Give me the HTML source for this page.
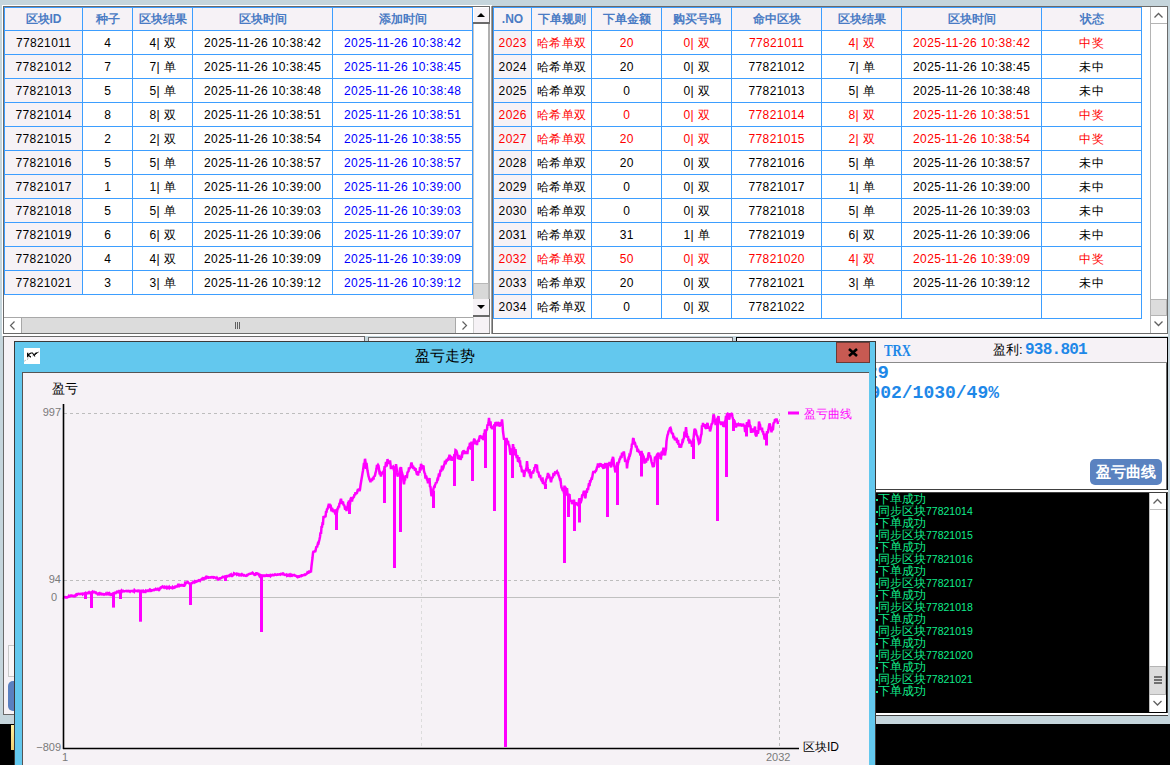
<!DOCTYPE html><html><head><meta charset="utf-8"><style>
html,body{margin:0;padding:0}
body{width:1170px;height:765px;position:relative;overflow:hidden;background:#c5d5dc;font-family:"Liberation Sans",sans-serif;font-size:12px}
div{position:absolute;box-sizing:border-box}
.t{text-align:center;white-space:nowrap;overflow:hidden}
</style></head><body>
<div style="left:2px;top:5px;width:489px;height:330px;background:#fff"></div>
<div style="left:3px;top:6px;width:487px;height:328px;border:1px solid #6a6a6a;border-right:none;border-bottom:none;background:#fff"></div>
<div style="left:3px;top:333px;width:487px;height:1px;background:#6a6a6a"></div>
<div style="left:4px;top:7px;width:469px;height:288px;background:#fff"></div>
<div style="left:4px;top:7px;width:469px;height:23px;background:#f6f2f6"></div>
<div style="left:4px;top:7px;width:78px;height:287px;background:#f6f2f6"></div>
<div style="left:4px;top:7px;width:469px;height:1px;background:#3d9eff"></div>
<div style="left:4px;top:30px;width:469px;height:1px;background:#3d9eff"></div>
<div style="left:4px;top:54px;width:469px;height:1px;background:#3d9eff"></div>
<div style="left:4px;top:78px;width:469px;height:1px;background:#3d9eff"></div>
<div style="left:4px;top:102px;width:469px;height:1px;background:#3d9eff"></div>
<div style="left:4px;top:126px;width:469px;height:1px;background:#3d9eff"></div>
<div style="left:4px;top:150px;width:469px;height:1px;background:#3d9eff"></div>
<div style="left:4px;top:174px;width:469px;height:1px;background:#3d9eff"></div>
<div style="left:4px;top:198px;width:469px;height:1px;background:#3d9eff"></div>
<div style="left:4px;top:222px;width:469px;height:1px;background:#3d9eff"></div>
<div style="left:4px;top:246px;width:469px;height:1px;background:#3d9eff"></div>
<div style="left:4px;top:270px;width:469px;height:1px;background:#3d9eff"></div>
<div style="left:4px;top:294px;width:469px;height:1px;background:#3d9eff"></div>
<div style="left:4px;top:7px;width:1px;height:288px;background:#3d9eff"></div>
<div style="left:82px;top:7px;width:1px;height:288px;background:#3d9eff"></div>
<div style="left:132px;top:7px;width:1px;height:288px;background:#3d9eff"></div>
<div style="left:192px;top:7px;width:1px;height:288px;background:#3d9eff"></div>
<div style="left:332px;top:7px;width:1px;height:288px;background:#3d9eff"></div>
<div style="left:472px;top:7px;width:1px;height:288px;background:#3d9eff"></div>
<div class="t" style="left:5px;top:8px;width:77px;height:22px;line-height:22px;font-weight:bold;color:#4a7bc4">区块ID</div>
<div class="t" style="left:83px;top:8px;width:49px;height:22px;line-height:22px;font-weight:bold;color:#4a7bc4">种子</div>
<div class="t" style="left:133px;top:8px;width:59px;height:22px;line-height:22px;font-weight:bold;color:#4a7bc4">区块结果</div>
<div class="t" style="left:193px;top:8px;width:139px;height:22px;line-height:22px;font-weight:bold;color:#4a7bc4">区块时间</div>
<div class="t" style="left:333px;top:8px;width:139px;height:22px;line-height:22px;font-weight:bold;color:#4a7bc4">添加时间</div>
<div class="t" style="left:5px;top:32px;width:77px;height:23px;line-height:23px;color:#000;letter-spacing:0.35px;text-indent:0.35px">77821011</div>
<div class="t" style="left:83px;top:32px;width:49px;height:23px;line-height:23px;color:#000;letter-spacing:0.35px;text-indent:0.35px">4</div>
<div class="t" style="left:133px;top:32px;width:59px;height:23px;line-height:23px;color:#000;letter-spacing:0.35px;text-indent:0.35px">4| 双</div>
<div class="t" style="left:193px;top:32px;width:139px;height:23px;line-height:23px;color:#000;letter-spacing:0.35px;text-indent:0.35px">2025-11-26 10:38:42</div>
<div class="t" style="left:333px;top:32px;width:139px;height:23px;line-height:23px;color:#0000ff;letter-spacing:0.35px;text-indent:0.35px">2025-11-26 10:38:42</div>
<div class="t" style="left:5px;top:56px;width:77px;height:23px;line-height:23px;color:#000;letter-spacing:0.35px;text-indent:0.35px">77821012</div>
<div class="t" style="left:83px;top:56px;width:49px;height:23px;line-height:23px;color:#000;letter-spacing:0.35px;text-indent:0.35px">7</div>
<div class="t" style="left:133px;top:56px;width:59px;height:23px;line-height:23px;color:#000;letter-spacing:0.35px;text-indent:0.35px">7| 单</div>
<div class="t" style="left:193px;top:56px;width:139px;height:23px;line-height:23px;color:#000;letter-spacing:0.35px;text-indent:0.35px">2025-11-26 10:38:45</div>
<div class="t" style="left:333px;top:56px;width:139px;height:23px;line-height:23px;color:#0000ff;letter-spacing:0.35px;text-indent:0.35px">2025-11-26 10:38:45</div>
<div class="t" style="left:5px;top:80px;width:77px;height:23px;line-height:23px;color:#000;letter-spacing:0.35px;text-indent:0.35px">77821013</div>
<div class="t" style="left:83px;top:80px;width:49px;height:23px;line-height:23px;color:#000;letter-spacing:0.35px;text-indent:0.35px">5</div>
<div class="t" style="left:133px;top:80px;width:59px;height:23px;line-height:23px;color:#000;letter-spacing:0.35px;text-indent:0.35px">5| 单</div>
<div class="t" style="left:193px;top:80px;width:139px;height:23px;line-height:23px;color:#000;letter-spacing:0.35px;text-indent:0.35px">2025-11-26 10:38:48</div>
<div class="t" style="left:333px;top:80px;width:139px;height:23px;line-height:23px;color:#0000ff;letter-spacing:0.35px;text-indent:0.35px">2025-11-26 10:38:48</div>
<div class="t" style="left:5px;top:104px;width:77px;height:23px;line-height:23px;color:#000;letter-spacing:0.35px;text-indent:0.35px">77821014</div>
<div class="t" style="left:83px;top:104px;width:49px;height:23px;line-height:23px;color:#000;letter-spacing:0.35px;text-indent:0.35px">8</div>
<div class="t" style="left:133px;top:104px;width:59px;height:23px;line-height:23px;color:#000;letter-spacing:0.35px;text-indent:0.35px">8| 双</div>
<div class="t" style="left:193px;top:104px;width:139px;height:23px;line-height:23px;color:#000;letter-spacing:0.35px;text-indent:0.35px">2025-11-26 10:38:51</div>
<div class="t" style="left:333px;top:104px;width:139px;height:23px;line-height:23px;color:#0000ff;letter-spacing:0.35px;text-indent:0.35px">2025-11-26 10:38:51</div>
<div class="t" style="left:5px;top:128px;width:77px;height:23px;line-height:23px;color:#000;letter-spacing:0.35px;text-indent:0.35px">77821015</div>
<div class="t" style="left:83px;top:128px;width:49px;height:23px;line-height:23px;color:#000;letter-spacing:0.35px;text-indent:0.35px">2</div>
<div class="t" style="left:133px;top:128px;width:59px;height:23px;line-height:23px;color:#000;letter-spacing:0.35px;text-indent:0.35px">2| 双</div>
<div class="t" style="left:193px;top:128px;width:139px;height:23px;line-height:23px;color:#000;letter-spacing:0.35px;text-indent:0.35px">2025-11-26 10:38:54</div>
<div class="t" style="left:333px;top:128px;width:139px;height:23px;line-height:23px;color:#0000ff;letter-spacing:0.35px;text-indent:0.35px">2025-11-26 10:38:55</div>
<div class="t" style="left:5px;top:152px;width:77px;height:23px;line-height:23px;color:#000;letter-spacing:0.35px;text-indent:0.35px">77821016</div>
<div class="t" style="left:83px;top:152px;width:49px;height:23px;line-height:23px;color:#000;letter-spacing:0.35px;text-indent:0.35px">5</div>
<div class="t" style="left:133px;top:152px;width:59px;height:23px;line-height:23px;color:#000;letter-spacing:0.35px;text-indent:0.35px">5| 单</div>
<div class="t" style="left:193px;top:152px;width:139px;height:23px;line-height:23px;color:#000;letter-spacing:0.35px;text-indent:0.35px">2025-11-26 10:38:57</div>
<div class="t" style="left:333px;top:152px;width:139px;height:23px;line-height:23px;color:#0000ff;letter-spacing:0.35px;text-indent:0.35px">2025-11-26 10:38:57</div>
<div class="t" style="left:5px;top:176px;width:77px;height:23px;line-height:23px;color:#000;letter-spacing:0.35px;text-indent:0.35px">77821017</div>
<div class="t" style="left:83px;top:176px;width:49px;height:23px;line-height:23px;color:#000;letter-spacing:0.35px;text-indent:0.35px">1</div>
<div class="t" style="left:133px;top:176px;width:59px;height:23px;line-height:23px;color:#000;letter-spacing:0.35px;text-indent:0.35px">1| 单</div>
<div class="t" style="left:193px;top:176px;width:139px;height:23px;line-height:23px;color:#000;letter-spacing:0.35px;text-indent:0.35px">2025-11-26 10:39:00</div>
<div class="t" style="left:333px;top:176px;width:139px;height:23px;line-height:23px;color:#0000ff;letter-spacing:0.35px;text-indent:0.35px">2025-11-26 10:39:00</div>
<div class="t" style="left:5px;top:200px;width:77px;height:23px;line-height:23px;color:#000;letter-spacing:0.35px;text-indent:0.35px">77821018</div>
<div class="t" style="left:83px;top:200px;width:49px;height:23px;line-height:23px;color:#000;letter-spacing:0.35px;text-indent:0.35px">5</div>
<div class="t" style="left:133px;top:200px;width:59px;height:23px;line-height:23px;color:#000;letter-spacing:0.35px;text-indent:0.35px">5| 单</div>
<div class="t" style="left:193px;top:200px;width:139px;height:23px;line-height:23px;color:#000;letter-spacing:0.35px;text-indent:0.35px">2025-11-26 10:39:03</div>
<div class="t" style="left:333px;top:200px;width:139px;height:23px;line-height:23px;color:#0000ff;letter-spacing:0.35px;text-indent:0.35px">2025-11-26 10:39:03</div>
<div class="t" style="left:5px;top:224px;width:77px;height:23px;line-height:23px;color:#000;letter-spacing:0.35px;text-indent:0.35px">77821019</div>
<div class="t" style="left:83px;top:224px;width:49px;height:23px;line-height:23px;color:#000;letter-spacing:0.35px;text-indent:0.35px">6</div>
<div class="t" style="left:133px;top:224px;width:59px;height:23px;line-height:23px;color:#000;letter-spacing:0.35px;text-indent:0.35px">6| 双</div>
<div class="t" style="left:193px;top:224px;width:139px;height:23px;line-height:23px;color:#000;letter-spacing:0.35px;text-indent:0.35px">2025-11-26 10:39:06</div>
<div class="t" style="left:333px;top:224px;width:139px;height:23px;line-height:23px;color:#0000ff;letter-spacing:0.35px;text-indent:0.35px">2025-11-26 10:39:07</div>
<div class="t" style="left:5px;top:248px;width:77px;height:23px;line-height:23px;color:#000;letter-spacing:0.35px;text-indent:0.35px">77821020</div>
<div class="t" style="left:83px;top:248px;width:49px;height:23px;line-height:23px;color:#000;letter-spacing:0.35px;text-indent:0.35px">4</div>
<div class="t" style="left:133px;top:248px;width:59px;height:23px;line-height:23px;color:#000;letter-spacing:0.35px;text-indent:0.35px">4| 双</div>
<div class="t" style="left:193px;top:248px;width:139px;height:23px;line-height:23px;color:#000;letter-spacing:0.35px;text-indent:0.35px">2025-11-26 10:39:09</div>
<div class="t" style="left:333px;top:248px;width:139px;height:23px;line-height:23px;color:#0000ff;letter-spacing:0.35px;text-indent:0.35px">2025-11-26 10:39:09</div>
<div class="t" style="left:5px;top:272px;width:77px;height:23px;line-height:23px;color:#000;letter-spacing:0.35px;text-indent:0.35px">77821021</div>
<div class="t" style="left:83px;top:272px;width:49px;height:23px;line-height:23px;color:#000;letter-spacing:0.35px;text-indent:0.35px">3</div>
<div class="t" style="left:133px;top:272px;width:59px;height:23px;line-height:23px;color:#000;letter-spacing:0.35px;text-indent:0.35px">3| 单</div>
<div class="t" style="left:193px;top:272px;width:139px;height:23px;line-height:23px;color:#000;letter-spacing:0.35px;text-indent:0.35px">2025-11-26 10:39:12</div>
<div class="t" style="left:333px;top:272px;width:139px;height:23px;line-height:23px;color:#0000ff;letter-spacing:0.35px;text-indent:0.35px">2025-11-26 10:39:12</div>
<div style="left:473px;top:7px;width:17px;height:310px;background:#fff"></div>
<div style="left:473px;top:7px;width:16px;height:16px;background:#f6f2f6;border-left:1px solid #fff;border-top:1px solid #fff"></div>
<div style="left:489px;top:7px;width:1px;height:17px;background:#6a6a6a"></div>
<div style="left:473px;top:22px;width:17px;height:2px;background:#6a6a6a"></div>
<svg style="position:absolute;left:473px;top:7px" width="16" height="16"><path d="M4 10 L8 6 L12 10 Z" fill="#000"/></svg>
<div style="left:473px;top:24px;width:1px;height:259px;background:#c8c8c8"></div>
<div style="left:488px;top:24px;width:2px;height:276px;background:#b0b0b0"></div>
<div style="left:473px;top:283px;width:16px;height:17px;background:#d8d8d8;border:1px solid #b8b8b8"></div>
<div style="left:473px;top:299px;width:17px;height:18px;background:#f6f2f6"></div>
<div style="left:489px;top:299px;width:1px;height:18px;background:#6a6a6a"></div>
<div style="left:473px;top:315px;width:17px;height:2px;background:#6a6a6a"></div>
<svg style="position:absolute;left:473px;top:299px" width="16" height="16"><path d="M4 6 L8 10 L12 6 Z" fill="#000"/></svg>
<div style="left:4px;top:317px;width:469px;height:16px;background:#fff"></div>
<div style="left:4px;top:317px;width:469px;height:1px;background:#a8a8a8"></div>
<div style="left:21px;top:318px;width:435px;height:15px;background:#dcdcdc;border-left:1px solid #a8a8a8;border-right:1px solid #a8a8a8"></div>
<svg style="position:absolute;left:4px;top:317px" width="17" height="16"><path d="M10.5 4.5 L6.5 8.5 L10.5 12.5" stroke="#606060" stroke-width="1.2" fill="none"/></svg>
<svg style="position:absolute;left:456px;top:317px" width="17" height="16"><path d="M6.5 4.5 L10.5 8.5 L6.5 12.5" stroke="#606060" stroke-width="1.2" fill="none"/></svg>
<div style="left:235px;top:322px;width:1px;height:7px;background:#606060"></div>
<div style="left:237px;top:322px;width:1px;height:7px;background:#606060"></div>
<div style="left:239px;top:322px;width:1px;height:7px;background:#606060"></div>
<div style="left:473px;top:317px;width:17px;height:16px;background:#f6f2f6"></div>
<div style="left:489px;top:317px;width:1px;height:16px;background:#a0a0a0"></div>
<div style="left:473px;top:317px;width:1px;height:16px;background:#d0d0d0"></div>
<div style="left:490px;top:5px;width:2px;height:330px;background:#fff"></div>
<div style="left:491px;top:6px;width:1px;height:328px;background:#a0a0a0"></div>
<div style="left:492px;top:6px;width:676px;height:328px;border:1px solid #6a6a6a;border-bottom:none;background:#fff"></div>
<div style="left:492px;top:333px;width:676px;height:1px;background:#6a6a6a"></div>
<div style="left:493px;top:7px;width:649px;height:312px;background:#fff"></div>
<div style="left:493px;top:7px;width:649px;height:23px;background:#f6f2f6"></div>
<div style="left:493px;top:7px;width:38px;height:311px;background:#f6f2f6"></div>
<div style="left:493px;top:7px;width:649px;height:1px;background:#3d9eff"></div>
<div style="left:493px;top:30px;width:649px;height:1px;background:#3d9eff"></div>
<div style="left:493px;top:54px;width:649px;height:1px;background:#3d9eff"></div>
<div style="left:493px;top:78px;width:649px;height:1px;background:#3d9eff"></div>
<div style="left:493px;top:102px;width:649px;height:1px;background:#3d9eff"></div>
<div style="left:493px;top:126px;width:649px;height:1px;background:#3d9eff"></div>
<div style="left:493px;top:150px;width:649px;height:1px;background:#3d9eff"></div>
<div style="left:493px;top:174px;width:649px;height:1px;background:#3d9eff"></div>
<div style="left:493px;top:198px;width:649px;height:1px;background:#3d9eff"></div>
<div style="left:493px;top:222px;width:649px;height:1px;background:#3d9eff"></div>
<div style="left:493px;top:246px;width:649px;height:1px;background:#3d9eff"></div>
<div style="left:493px;top:270px;width:649px;height:1px;background:#3d9eff"></div>
<div style="left:493px;top:294px;width:649px;height:1px;background:#3d9eff"></div>
<div style="left:493px;top:318px;width:649px;height:1px;background:#3d9eff"></div>
<div style="left:493px;top:7px;width:1px;height:312px;background:#3d9eff"></div>
<div style="left:531px;top:7px;width:1px;height:312px;background:#3d9eff"></div>
<div style="left:591px;top:7px;width:1px;height:312px;background:#3d9eff"></div>
<div style="left:661px;top:7px;width:1px;height:312px;background:#3d9eff"></div>
<div style="left:731px;top:7px;width:1px;height:312px;background:#3d9eff"></div>
<div style="left:821px;top:7px;width:1px;height:312px;background:#3d9eff"></div>
<div style="left:901px;top:7px;width:1px;height:312px;background:#3d9eff"></div>
<div style="left:1041px;top:7px;width:1px;height:312px;background:#3d9eff"></div>
<div style="left:1141px;top:7px;width:1px;height:312px;background:#3d9eff"></div>
<div class="t" style="left:494px;top:8px;width:37px;height:22px;line-height:22px;font-weight:bold;color:#4a7bc4">.NO</div>
<div class="t" style="left:532px;top:8px;width:59px;height:22px;line-height:22px;font-weight:bold;color:#4a7bc4">下单规则</div>
<div class="t" style="left:592px;top:8px;width:69px;height:22px;line-height:22px;font-weight:bold;color:#4a7bc4">下单金额</div>
<div class="t" style="left:662px;top:8px;width:69px;height:22px;line-height:22px;font-weight:bold;color:#4a7bc4">购买号码</div>
<div class="t" style="left:732px;top:8px;width:89px;height:22px;line-height:22px;font-weight:bold;color:#4a7bc4">命中区块</div>
<div class="t" style="left:822px;top:8px;width:79px;height:22px;line-height:22px;font-weight:bold;color:#4a7bc4">区块结果</div>
<div class="t" style="left:902px;top:8px;width:139px;height:22px;line-height:22px;font-weight:bold;color:#4a7bc4">区块时间</div>
<div class="t" style="left:1042px;top:8px;width:99px;height:22px;line-height:22px;font-weight:bold;color:#4a7bc4">状态</div>
<div class="t" style="left:494px;top:32px;width:37px;height:23px;line-height:23px;color:#ff0000;letter-spacing:0.35px;text-indent:0.35px">2023</div>
<div class="t" style="left:532px;top:32px;width:59px;height:23px;line-height:23px;color:#ff0000;letter-spacing:0.35px;text-indent:0.35px">哈希单双</div>
<div class="t" style="left:592px;top:32px;width:69px;height:23px;line-height:23px;color:#ff0000;letter-spacing:0.35px;text-indent:0.35px">20</div>
<div class="t" style="left:662px;top:32px;width:69px;height:23px;line-height:23px;color:#ff0000;letter-spacing:0.35px;text-indent:0.35px">0| 双</div>
<div class="t" style="left:732px;top:32px;width:89px;height:23px;line-height:23px;color:#ff0000;letter-spacing:0.35px;text-indent:0.35px">77821011</div>
<div class="t" style="left:822px;top:32px;width:79px;height:23px;line-height:23px;color:#ff0000;letter-spacing:0.35px;text-indent:0.35px">4| 双</div>
<div class="t" style="left:902px;top:32px;width:139px;height:23px;line-height:23px;color:#ff0000;letter-spacing:0.35px;text-indent:0.35px">2025-11-26 10:38:42</div>
<div class="t" style="left:1042px;top:32px;width:99px;height:23px;line-height:23px;color:#ff0000;letter-spacing:0.35px;text-indent:0.35px">中奖</div>
<div class="t" style="left:494px;top:56px;width:37px;height:23px;line-height:23px;color:#000;letter-spacing:0.35px;text-indent:0.35px">2024</div>
<div class="t" style="left:532px;top:56px;width:59px;height:23px;line-height:23px;color:#000;letter-spacing:0.35px;text-indent:0.35px">哈希单双</div>
<div class="t" style="left:592px;top:56px;width:69px;height:23px;line-height:23px;color:#000;letter-spacing:0.35px;text-indent:0.35px">20</div>
<div class="t" style="left:662px;top:56px;width:69px;height:23px;line-height:23px;color:#000;letter-spacing:0.35px;text-indent:0.35px">0| 双</div>
<div class="t" style="left:732px;top:56px;width:89px;height:23px;line-height:23px;color:#000;letter-spacing:0.35px;text-indent:0.35px">77821012</div>
<div class="t" style="left:822px;top:56px;width:79px;height:23px;line-height:23px;color:#000;letter-spacing:0.35px;text-indent:0.35px">7| 单</div>
<div class="t" style="left:902px;top:56px;width:139px;height:23px;line-height:23px;color:#000;letter-spacing:0.35px;text-indent:0.35px">2025-11-26 10:38:45</div>
<div class="t" style="left:1042px;top:56px;width:99px;height:23px;line-height:23px;color:#000;letter-spacing:0.35px;text-indent:0.35px">未中</div>
<div class="t" style="left:494px;top:80px;width:37px;height:23px;line-height:23px;color:#000;letter-spacing:0.35px;text-indent:0.35px">2025</div>
<div class="t" style="left:532px;top:80px;width:59px;height:23px;line-height:23px;color:#000;letter-spacing:0.35px;text-indent:0.35px">哈希单双</div>
<div class="t" style="left:592px;top:80px;width:69px;height:23px;line-height:23px;color:#000;letter-spacing:0.35px;text-indent:0.35px">0</div>
<div class="t" style="left:662px;top:80px;width:69px;height:23px;line-height:23px;color:#000;letter-spacing:0.35px;text-indent:0.35px">0| 双</div>
<div class="t" style="left:732px;top:80px;width:89px;height:23px;line-height:23px;color:#000;letter-spacing:0.35px;text-indent:0.35px">77821013</div>
<div class="t" style="left:822px;top:80px;width:79px;height:23px;line-height:23px;color:#000;letter-spacing:0.35px;text-indent:0.35px">5| 单</div>
<div class="t" style="left:902px;top:80px;width:139px;height:23px;line-height:23px;color:#000;letter-spacing:0.35px;text-indent:0.35px">2025-11-26 10:38:48</div>
<div class="t" style="left:1042px;top:80px;width:99px;height:23px;line-height:23px;color:#000;letter-spacing:0.35px;text-indent:0.35px">未中</div>
<div class="t" style="left:494px;top:104px;width:37px;height:23px;line-height:23px;color:#ff0000;letter-spacing:0.35px;text-indent:0.35px">2026</div>
<div class="t" style="left:532px;top:104px;width:59px;height:23px;line-height:23px;color:#ff0000;letter-spacing:0.35px;text-indent:0.35px">哈希单双</div>
<div class="t" style="left:592px;top:104px;width:69px;height:23px;line-height:23px;color:#ff0000;letter-spacing:0.35px;text-indent:0.35px">0</div>
<div class="t" style="left:662px;top:104px;width:69px;height:23px;line-height:23px;color:#ff0000;letter-spacing:0.35px;text-indent:0.35px">0| 双</div>
<div class="t" style="left:732px;top:104px;width:89px;height:23px;line-height:23px;color:#ff0000;letter-spacing:0.35px;text-indent:0.35px">77821014</div>
<div class="t" style="left:822px;top:104px;width:79px;height:23px;line-height:23px;color:#ff0000;letter-spacing:0.35px;text-indent:0.35px">8| 双</div>
<div class="t" style="left:902px;top:104px;width:139px;height:23px;line-height:23px;color:#ff0000;letter-spacing:0.35px;text-indent:0.35px">2025-11-26 10:38:51</div>
<div class="t" style="left:1042px;top:104px;width:99px;height:23px;line-height:23px;color:#ff0000;letter-spacing:0.35px;text-indent:0.35px">中奖</div>
<div class="t" style="left:494px;top:128px;width:37px;height:23px;line-height:23px;color:#ff0000;letter-spacing:0.35px;text-indent:0.35px">2027</div>
<div class="t" style="left:532px;top:128px;width:59px;height:23px;line-height:23px;color:#ff0000;letter-spacing:0.35px;text-indent:0.35px">哈希单双</div>
<div class="t" style="left:592px;top:128px;width:69px;height:23px;line-height:23px;color:#ff0000;letter-spacing:0.35px;text-indent:0.35px">20</div>
<div class="t" style="left:662px;top:128px;width:69px;height:23px;line-height:23px;color:#ff0000;letter-spacing:0.35px;text-indent:0.35px">0| 双</div>
<div class="t" style="left:732px;top:128px;width:89px;height:23px;line-height:23px;color:#ff0000;letter-spacing:0.35px;text-indent:0.35px">77821015</div>
<div class="t" style="left:822px;top:128px;width:79px;height:23px;line-height:23px;color:#ff0000;letter-spacing:0.35px;text-indent:0.35px">2| 双</div>
<div class="t" style="left:902px;top:128px;width:139px;height:23px;line-height:23px;color:#ff0000;letter-spacing:0.35px;text-indent:0.35px">2025-11-26 10:38:54</div>
<div class="t" style="left:1042px;top:128px;width:99px;height:23px;line-height:23px;color:#ff0000;letter-spacing:0.35px;text-indent:0.35px">中奖</div>
<div class="t" style="left:494px;top:152px;width:37px;height:23px;line-height:23px;color:#000;letter-spacing:0.35px;text-indent:0.35px">2028</div>
<div class="t" style="left:532px;top:152px;width:59px;height:23px;line-height:23px;color:#000;letter-spacing:0.35px;text-indent:0.35px">哈希单双</div>
<div class="t" style="left:592px;top:152px;width:69px;height:23px;line-height:23px;color:#000;letter-spacing:0.35px;text-indent:0.35px">20</div>
<div class="t" style="left:662px;top:152px;width:69px;height:23px;line-height:23px;color:#000;letter-spacing:0.35px;text-indent:0.35px">0| 双</div>
<div class="t" style="left:732px;top:152px;width:89px;height:23px;line-height:23px;color:#000;letter-spacing:0.35px;text-indent:0.35px">77821016</div>
<div class="t" style="left:822px;top:152px;width:79px;height:23px;line-height:23px;color:#000;letter-spacing:0.35px;text-indent:0.35px">5| 单</div>
<div class="t" style="left:902px;top:152px;width:139px;height:23px;line-height:23px;color:#000;letter-spacing:0.35px;text-indent:0.35px">2025-11-26 10:38:57</div>
<div class="t" style="left:1042px;top:152px;width:99px;height:23px;line-height:23px;color:#000;letter-spacing:0.35px;text-indent:0.35px">未中</div>
<div class="t" style="left:494px;top:176px;width:37px;height:23px;line-height:23px;color:#000;letter-spacing:0.35px;text-indent:0.35px">2029</div>
<div class="t" style="left:532px;top:176px;width:59px;height:23px;line-height:23px;color:#000;letter-spacing:0.35px;text-indent:0.35px">哈希单双</div>
<div class="t" style="left:592px;top:176px;width:69px;height:23px;line-height:23px;color:#000;letter-spacing:0.35px;text-indent:0.35px">0</div>
<div class="t" style="left:662px;top:176px;width:69px;height:23px;line-height:23px;color:#000;letter-spacing:0.35px;text-indent:0.35px">0| 双</div>
<div class="t" style="left:732px;top:176px;width:89px;height:23px;line-height:23px;color:#000;letter-spacing:0.35px;text-indent:0.35px">77821017</div>
<div class="t" style="left:822px;top:176px;width:79px;height:23px;line-height:23px;color:#000;letter-spacing:0.35px;text-indent:0.35px">1| 单</div>
<div class="t" style="left:902px;top:176px;width:139px;height:23px;line-height:23px;color:#000;letter-spacing:0.35px;text-indent:0.35px">2025-11-26 10:39:00</div>
<div class="t" style="left:1042px;top:176px;width:99px;height:23px;line-height:23px;color:#000;letter-spacing:0.35px;text-indent:0.35px">未中</div>
<div class="t" style="left:494px;top:200px;width:37px;height:23px;line-height:23px;color:#000;letter-spacing:0.35px;text-indent:0.35px">2030</div>
<div class="t" style="left:532px;top:200px;width:59px;height:23px;line-height:23px;color:#000;letter-spacing:0.35px;text-indent:0.35px">哈希单双</div>
<div class="t" style="left:592px;top:200px;width:69px;height:23px;line-height:23px;color:#000;letter-spacing:0.35px;text-indent:0.35px">0</div>
<div class="t" style="left:662px;top:200px;width:69px;height:23px;line-height:23px;color:#000;letter-spacing:0.35px;text-indent:0.35px">0| 双</div>
<div class="t" style="left:732px;top:200px;width:89px;height:23px;line-height:23px;color:#000;letter-spacing:0.35px;text-indent:0.35px">77821018</div>
<div class="t" style="left:822px;top:200px;width:79px;height:23px;line-height:23px;color:#000;letter-spacing:0.35px;text-indent:0.35px">5| 单</div>
<div class="t" style="left:902px;top:200px;width:139px;height:23px;line-height:23px;color:#000;letter-spacing:0.35px;text-indent:0.35px">2025-11-26 10:39:03</div>
<div class="t" style="left:1042px;top:200px;width:99px;height:23px;line-height:23px;color:#000;letter-spacing:0.35px;text-indent:0.35px">未中</div>
<div class="t" style="left:494px;top:224px;width:37px;height:23px;line-height:23px;color:#000;letter-spacing:0.35px;text-indent:0.35px">2031</div>
<div class="t" style="left:532px;top:224px;width:59px;height:23px;line-height:23px;color:#000;letter-spacing:0.35px;text-indent:0.35px">哈希单双</div>
<div class="t" style="left:592px;top:224px;width:69px;height:23px;line-height:23px;color:#000;letter-spacing:0.35px;text-indent:0.35px">31</div>
<div class="t" style="left:662px;top:224px;width:69px;height:23px;line-height:23px;color:#000;letter-spacing:0.35px;text-indent:0.35px">1| 单</div>
<div class="t" style="left:732px;top:224px;width:89px;height:23px;line-height:23px;color:#000;letter-spacing:0.35px;text-indent:0.35px">77821019</div>
<div class="t" style="left:822px;top:224px;width:79px;height:23px;line-height:23px;color:#000;letter-spacing:0.35px;text-indent:0.35px">6| 双</div>
<div class="t" style="left:902px;top:224px;width:139px;height:23px;line-height:23px;color:#000;letter-spacing:0.35px;text-indent:0.35px">2025-11-26 10:39:06</div>
<div class="t" style="left:1042px;top:224px;width:99px;height:23px;line-height:23px;color:#000;letter-spacing:0.35px;text-indent:0.35px">未中</div>
<div class="t" style="left:494px;top:248px;width:37px;height:23px;line-height:23px;color:#ff0000;letter-spacing:0.35px;text-indent:0.35px">2032</div>
<div class="t" style="left:532px;top:248px;width:59px;height:23px;line-height:23px;color:#ff0000;letter-spacing:0.35px;text-indent:0.35px">哈希单双</div>
<div class="t" style="left:592px;top:248px;width:69px;height:23px;line-height:23px;color:#ff0000;letter-spacing:0.35px;text-indent:0.35px">50</div>
<div class="t" style="left:662px;top:248px;width:69px;height:23px;line-height:23px;color:#ff0000;letter-spacing:0.35px;text-indent:0.35px">0| 双</div>
<div class="t" style="left:732px;top:248px;width:89px;height:23px;line-height:23px;color:#ff0000;letter-spacing:0.35px;text-indent:0.35px">77821020</div>
<div class="t" style="left:822px;top:248px;width:79px;height:23px;line-height:23px;color:#ff0000;letter-spacing:0.35px;text-indent:0.35px">4| 双</div>
<div class="t" style="left:902px;top:248px;width:139px;height:23px;line-height:23px;color:#ff0000;letter-spacing:0.35px;text-indent:0.35px">2025-11-26 10:39:09</div>
<div class="t" style="left:1042px;top:248px;width:99px;height:23px;line-height:23px;color:#ff0000;letter-spacing:0.35px;text-indent:0.35px">中奖</div>
<div class="t" style="left:494px;top:272px;width:37px;height:23px;line-height:23px;color:#000;letter-spacing:0.35px;text-indent:0.35px">2033</div>
<div class="t" style="left:532px;top:272px;width:59px;height:23px;line-height:23px;color:#000;letter-spacing:0.35px;text-indent:0.35px">哈希单双</div>
<div class="t" style="left:592px;top:272px;width:69px;height:23px;line-height:23px;color:#000;letter-spacing:0.35px;text-indent:0.35px">20</div>
<div class="t" style="left:662px;top:272px;width:69px;height:23px;line-height:23px;color:#000;letter-spacing:0.35px;text-indent:0.35px">0| 双</div>
<div class="t" style="left:732px;top:272px;width:89px;height:23px;line-height:23px;color:#000;letter-spacing:0.35px;text-indent:0.35px">77821021</div>
<div class="t" style="left:822px;top:272px;width:79px;height:23px;line-height:23px;color:#000;letter-spacing:0.35px;text-indent:0.35px">3| 单</div>
<div class="t" style="left:902px;top:272px;width:139px;height:23px;line-height:23px;color:#000;letter-spacing:0.35px;text-indent:0.35px">2025-11-26 10:39:12</div>
<div class="t" style="left:1042px;top:272px;width:99px;height:23px;line-height:23px;color:#000;letter-spacing:0.35px;text-indent:0.35px">未中</div>
<div class="t" style="left:494px;top:296px;width:37px;height:23px;line-height:23px;color:#000;letter-spacing:0.35px;text-indent:0.35px">2034</div>
<div class="t" style="left:532px;top:296px;width:59px;height:23px;line-height:23px;color:#000;letter-spacing:0.35px;text-indent:0.35px">哈希单双</div>
<div class="t" style="left:592px;top:296px;width:69px;height:23px;line-height:23px;color:#000;letter-spacing:0.35px;text-indent:0.35px">0</div>
<div class="t" style="left:662px;top:296px;width:69px;height:23px;line-height:23px;color:#000;letter-spacing:0.35px;text-indent:0.35px">0| 双</div>
<div class="t" style="left:732px;top:296px;width:89px;height:23px;line-height:23px;color:#000;letter-spacing:0.35px;text-indent:0.35px">77821022</div>
<div class="t" style="left:822px;top:296px;width:79px;height:23px;line-height:23px;color:#000;letter-spacing:0.35px;text-indent:0.35px"></div>
<div class="t" style="left:902px;top:296px;width:139px;height:23px;line-height:23px;color:#000;letter-spacing:0.35px;text-indent:0.35px"></div>
<div class="t" style="left:1042px;top:296px;width:99px;height:23px;line-height:23px;color:#000;letter-spacing:0.35px;text-indent:0.35px"></div>
<div style="left:1150px;top:7px;width:17px;height:326px;background:#fff;border-left:1px solid #b4b4b4"></div>
<div style="left:1150px;top:23px;width:17px;height:1px;background:#b4b4b4"></div>
<svg style="position:absolute;left:1150px;top:7px" width="17" height="16"><path d="M4.5 10.5 L8.5 6.5 L12.5 10.5" stroke="#606060" stroke-width="1.3" fill="none"/></svg>
<div style="left:1150px;top:299px;width:17px;height:17px;background:#dcdcdc;border:1px solid #b4b4b4"></div>
<svg style="position:absolute;left:1150px;top:316px" width="17" height="16"><path d="M4.5 5.5 L8.5 9.5 L12.5 5.5" stroke="#606060" stroke-width="1.3" fill="none"/></svg>
<div style="left:2px;top:334px;width:1166px;height:2px;background:#fff"></div>
<div style="left:3px;top:336px;width:362px;height:379px;border:1px solid #6a6a6a;background:#f6f2f6"></div>
<div style="left:8px;top:645px;width:120px;height:32px;border:1px solid #c8c8c8;background:#f8f6f8"></div>
<div style="left:8px;top:681px;width:120px;height:30px;background:#5a80c0;border-radius:5px"></div>
<div style="left:368px;top:337px;width:365px;height:378px;border:1px solid #6a6a6a;background:#f6f2f6"></div>
<div style="left:736px;top:337px;width:432px;height:155px;border:1px solid #000;background:#fff"></div>
<div style="left:737px;top:338px;width:430px;height:24px;background:#f6f2f6"></div>
<div style="left:737px;top:362px;width:430px;height:1px;background:#8a8a8a"></div>
<div style="left:1166px;top:363px;width:1px;height:127px;background:#6a6a6a"></div>
<div style="left:737px;top:489px;width:430px;height:1px;background:#404040"></div>
<div style="left:884px;top:341px;font-family:'Liberation Serif',serif;font-weight:bold;font-size:16px;color:#1e88e8;line-height:20px;transform:scaleX(0.8);transform-origin:0 0">TRX</div>
<div style="left:993px;top:341px;font-size:13px;color:#000;line-height:18px">盈利:</div>
<div style="left:1025px;top:340px;font-family:'Liberation Mono',monospace;font-weight:bold;font-size:16px;letter-spacing:-0.75px;color:#1e88e8;line-height:20px">938.801</div>
<div style="right:281px;top:363px;font-family:'Liberation Mono',monospace;font-weight:bold;font-size:19px;color:#1e88e8;line-height:20px;white-space:pre">1029</div>
<div style="right:171px;top:383px;font-family:'Liberation Mono',monospace;font-weight:bold;font-size:18px;color:#1e88e8;line-height:20px;white-space:pre">902/1030/49%</div>
<div style="left:1090px;top:459px;width:72px;height:26px;background:#5a82c0;border-radius:5px;color:#fff;font-size:15px;font-weight:bold;line-height:26px;text-align:center">盈亏曲线</div>
<div style="left:736px;top:490px;width:432px;height:2px;background:#fff"></div>
<div style="left:736px;top:492px;width:432px;height:224px;border:1px solid #404040;background:#000"></div>
<div style="left:736px;top:713px;width:432px;height:2px;background:#fff"></div>
<div style="left:736px;top:715px;width:432px;height:1px;background:#404040"></div>
<div style="left:876px;top:492px;width:273px;height:220px;overflow:hidden"><div style="left:0px;top:7px;width:2px;height:2px;background:#10ec8c"></div><div style="left:2px;top:0px;font-size:12px;line-height:14px;color:#10ec8c;white-space:nowrap">下单成功</div><div style="left:0px;top:19px;width:2px;height:2px;background:#10ec8c"></div><div style="left:2px;top:12px;font-size:12px;line-height:14px;color:#10ec8c;white-space:nowrap">同步区块<span style="font-size:10.5px">77821014</span></div><div style="left:0px;top:31px;width:2px;height:2px;background:#10ec8c"></div><div style="left:2px;top:24px;font-size:12px;line-height:14px;color:#10ec8c;white-space:nowrap">下单成功</div><div style="left:0px;top:43px;width:2px;height:2px;background:#10ec8c"></div><div style="left:2px;top:36px;font-size:12px;line-height:14px;color:#10ec8c;white-space:nowrap">同步区块<span style="font-size:10.5px">77821015</span></div><div style="left:0px;top:55px;width:2px;height:2px;background:#10ec8c"></div><div style="left:2px;top:48px;font-size:12px;line-height:14px;color:#10ec8c;white-space:nowrap">下单成功</div><div style="left:0px;top:67px;width:2px;height:2px;background:#10ec8c"></div><div style="left:2px;top:60px;font-size:12px;line-height:14px;color:#10ec8c;white-space:nowrap">同步区块<span style="font-size:10.5px">77821016</span></div><div style="left:0px;top:79px;width:2px;height:2px;background:#10ec8c"></div><div style="left:2px;top:72px;font-size:12px;line-height:14px;color:#10ec8c;white-space:nowrap">下单成功</div><div style="left:0px;top:91px;width:2px;height:2px;background:#10ec8c"></div><div style="left:2px;top:84px;font-size:12px;line-height:14px;color:#10ec8c;white-space:nowrap">同步区块<span style="font-size:10.5px">77821017</span></div><div style="left:0px;top:103px;width:2px;height:2px;background:#10ec8c"></div><div style="left:2px;top:96px;font-size:12px;line-height:14px;color:#10ec8c;white-space:nowrap">下单成功</div><div style="left:0px;top:115px;width:2px;height:2px;background:#10ec8c"></div><div style="left:2px;top:108px;font-size:12px;line-height:14px;color:#10ec8c;white-space:nowrap">同步区块<span style="font-size:10.5px">77821018</span></div><div style="left:0px;top:127px;width:2px;height:2px;background:#10ec8c"></div><div style="left:2px;top:120px;font-size:12px;line-height:14px;color:#10ec8c;white-space:nowrap">下单成功</div><div style="left:0px;top:139px;width:2px;height:2px;background:#10ec8c"></div><div style="left:2px;top:132px;font-size:12px;line-height:14px;color:#10ec8c;white-space:nowrap">同步区块<span style="font-size:10.5px">77821019</span></div><div style="left:0px;top:151px;width:2px;height:2px;background:#10ec8c"></div><div style="left:2px;top:144px;font-size:12px;line-height:14px;color:#10ec8c;white-space:nowrap">下单成功</div><div style="left:0px;top:163px;width:2px;height:2px;background:#10ec8c"></div><div style="left:2px;top:156px;font-size:12px;line-height:14px;color:#10ec8c;white-space:nowrap">同步区块<span style="font-size:10.5px">77821020</span></div><div style="left:0px;top:175px;width:2px;height:2px;background:#10ec8c"></div><div style="left:2px;top:168px;font-size:12px;line-height:14px;color:#10ec8c;white-space:nowrap">下单成功</div><div style="left:0px;top:187px;width:2px;height:2px;background:#10ec8c"></div><div style="left:2px;top:180px;font-size:12px;line-height:14px;color:#10ec8c;white-space:nowrap">同步区块<span style="font-size:10.5px">77821021</span></div><div style="left:0px;top:199px;width:2px;height:2px;background:#10ec8c"></div><div style="left:2px;top:192px;font-size:12px;line-height:14px;color:#10ec8c;white-space:nowrap">下单成功</div></div>
<div style="left:1149px;top:493px;width:17px;height:219px;background:#fff;border-left:1px solid #c0c0c0"></div>
<div style="left:1149px;top:509px;width:17px;height:1px;background:#c0c0c0"></div>
<svg style="position:absolute;left:1149px;top:493px" width="17" height="16"><path d="M4.5 10.5 L8.5 6.5 L12.5 10.5" stroke="#606060" stroke-width="1.3" fill="none"/></svg>
<div style="left:1149px;top:666px;width:17px;height:29px;background:#dcdcdc;border:1px solid #b4b4b4"></div>
<div style="left:1154px;top:676px;width:8px;height:2px;background:#707070"></div>
<div style="left:1154px;top:679px;width:8px;height:2px;background:#707070"></div>
<div style="left:1154px;top:682px;width:8px;height:2px;background:#707070"></div>
<svg style="position:absolute;left:1149px;top:695px" width="17" height="16"><path d="M4.5 6 L8.5 10 L12.5 6" stroke="#606060" stroke-width="1.3" fill="none"/></svg>
<div style="left:0px;top:716px;width:1170px;height:8px;background:#c5d5dc"></div>
<div style="left:0px;top:724px;width:1170px;height:41px;background:#000"></div>
<div style="left:11px;top:725px;width:3px;height:25px;background:linear-gradient(#fff0a0,#f0d070)"></div>
<div style="left:14px;top:341px;width:862px;height:440px;border:1px solid #3a3a3a;background:#63c8ee"></div>
<div style="left:24px;top:348px;width:16px;height:16px;background:#fff"><svg width="16" height="16" style="position:absolute;left:0;top:0"><path d="M0.5 13 L15.5 3.5" stroke="#777" stroke-width="0.9" stroke-dasharray="1.2,2" fill="none"/><path d="M3.7 4.8 L3.7 9.2" stroke="#000" stroke-width="1.3"/><path d="M4 7 L6.8 5 M4 7 L6.8 9" stroke="#000" stroke-width="1.1" fill="none"/><path d="M6.8 5 L8.5 5 L11 8.5" stroke="#000" stroke-width="1.1" fill="none"/><path d="M10.3 7.2 L13.6 4.6 L11.2 5.2 Z" fill="#000" stroke="#000" stroke-width="0.8"/></svg></div>
<div style="left:380px;top:347px;width:130px;text-align:center;font-size:15px;line-height:18px;color:#000">盈亏走势</div>
<div style="left:836px;top:342px;width:34px;height:21px;background:#c75a52;border:1px solid #6a3a36"></div>
<svg style="position:absolute;left:836px;top:342px" width="34" height="21"><path d="M13 7 L21 14 M21 7 L13 14" stroke="#000" stroke-width="2.6" fill="none"/></svg>
<div style="left:22px;top:372px;width:847px;height:400px;border-top:1px solid #555;border-left:1px solid #555;background:#f6f2f6"></div>
<div style="left:52px;top:381px;font-size:13px;line-height:16px;color:#000">盈亏</div>
<svg style="position:absolute;left:23px;top:373px" width="845" height="392"><line x1="41" y1="40.5" x2="756" y2="40.5" stroke="#bdbdbd" stroke-width="1" stroke-dasharray="3,3"/><line x1="41" y1="207.5" x2="756" y2="207.5" stroke="#bdbdbd" stroke-width="1" stroke-dasharray="3,3"/><line x1="41" y1="224.5" x2="756" y2="224.5" stroke="#c0c0c0" stroke-width="1"/><line x1="398.5" y1="40" x2="398.5" y2="375" stroke="#dcdcdc" stroke-width="1" stroke-dasharray="3,3"/><line x1="756.5" y1="40" x2="756.5" y2="375" stroke="#bdbdbd" stroke-width="1" stroke-dasharray="3,3"/><polyline points="40.0,224.4 40.5,224.6 41.0,224.3 41.5,224.2 42.0,224.0 42.5,224.2 43.0,224.6 43.5,224.3 44.0,224.5 44.5,224.1 45.0,224.1 45.5,223.8 46.0,222.9 46.5,223.5 47.0,223.2 47.5,223.2 48.0,222.4 48.5,222.4 49.0,222.7 49.5,222.8 50.0,223.1 50.5,223.0 51.0,223.2 51.5,222.8 52.0,223.1 52.5,222.6 53.0,221.8 53.5,222.1 54.0,221.2 54.5,221.4 55.0,220.8 55.5,220.7 56.0,220.9 56.5,221.0 57.0,221.2 57.5,221.1 58.0,220.8 58.5,220.7 59.0,220.8 59.5,221.4 60.0,220.7 60.5,221.1 61.0,221.1 61.5,220.5 62.0,221.0 62.5,221.3 63.0,220.0 63.5,220.4 64.0,220.3 64.5,219.9 65.0,220.2 65.5,219.9 66.0,219.3 66.5,220.0 67.0,219.9 67.5,219.9 68.0,220.0 68.5,219.5 69.0,219.4 69.5,218.8 70.0,219.4 70.5,218.9 71.0,218.8 71.5,218.9 72.0,219.3 72.5,219.8 73.0,220.8 73.5,220.0 74.0,220.5 74.5,221.1 75.0,221.5 75.5,221.2 76.0,220.3 76.5,220.1 77.0,221.1 77.5,220.7 78.0,220.6 78.5,221.3 79.0,221.4 79.5,221.1 80.0,221.1 80.5,221.2 81.0,221.6 81.5,221.2 82.0,221.2 82.5,221.2 83.0,220.5 83.5,221.4 84.0,221.3 84.5,221.2 85.0,220.3 85.5,220.8 86.0,221.3 86.5,220.4 87.0,220.9 87.5,221.4 88.0,220.5 88.5,221.6 89.0,221.2 89.5,220.7 90.0,220.7 90.5,220.6 91.0,220.2 91.5,220.4 92.0,219.6 92.5,219.5 93.0,219.8 93.5,219.2 94.0,218.7 94.5,219.2 95.0,219.3 95.5,218.5 96.0,218.0 96.5,218.3 97.0,218.2 97.5,218.0 98.0,218.5 98.5,217.6 99.0,218.4 99.5,217.6 100.0,217.7 100.5,218.2 101.0,218.4 101.5,218.3 102.0,218.1 102.5,218.0 103.0,218.1 103.5,218.2 104.0,217.9 104.5,218.1 105.0,218.2 105.5,218.0 106.0,218.3 106.5,218.2 107.0,218.7 107.5,218.1 108.0,217.9 108.5,217.9 109.0,218.0 109.5,218.3 110.0,217.9 110.5,218.1 111.0,218.6 111.5,217.1 112.0,217.6 112.5,218.1 113.0,218.1 113.5,218.1 114.0,217.8 114.5,218.2 115.0,218.1 115.5,217.8 116.0,218.9 116.5,218.1 117.0,217.8 117.5,218.0 118.0,217.9 118.5,218.0 119.0,217.0 119.5,217.9 120.0,218.6 120.5,217.9 121.0,218.4 121.5,218.9 122.0,219.0 122.5,219.0 123.0,217.7 123.5,218.0 124.0,217.8 124.5,218.0 125.0,218.0 125.5,216.6 126.0,217.9 126.5,217.0 127.0,217.7 127.5,217.0 128.0,217.5 128.5,217.8 129.0,217.3 129.5,217.3 130.0,217.3 130.5,216.9 131.0,216.7 131.5,217.1 132.0,216.8 132.5,216.2 133.0,217.2 133.5,215.7 134.0,216.3 134.5,215.8 135.0,215.8 135.5,216.6 136.0,217.1 136.5,216.6 137.0,215.3 137.5,214.7 138.0,214.8 138.5,214.1 139.0,213.8 139.5,213.5 140.0,214.2 140.5,214.2 141.0,214.6 141.5,213.9 142.0,214.3 142.5,214.1 143.0,214.9 143.5,215.2 144.0,214.3 144.5,215.1 145.0,214.9 145.5,214.5 146.0,213.9 146.5,215.1 147.0,214.6 147.5,214.4 148.0,214.7 148.5,214.6 149.0,215.0 149.5,214.1 150.0,214.8 150.5,214.9 151.0,214.8 151.5,214.0 152.0,213.6 152.5,214.0 153.0,213.5 153.5,213.3 154.0,213.5 154.5,212.8 155.0,212.1 155.5,212.7 156.0,212.1 156.5,213.0 157.0,212.7 157.5,212.3 158.0,212.5 158.5,212.5 159.0,212.0 159.5,212.2 160.0,211.5 160.5,212.6 161.0,213.5 161.5,212.3 162.0,210.3 162.5,210.7 163.0,209.6 163.5,209.7 164.0,209.3 164.5,210.2 165.0,209.3 165.5,210.0 166.0,210.3 166.5,210.7 167.0,210.8 167.5,210.8 168.0,211.1 168.5,210.2 169.0,210.1 169.5,210.0 170.0,209.3 170.5,208.8 171.0,208.9 171.5,209.3 172.0,208.2 172.5,208.4 173.0,208.8 173.5,208.6 174.0,208.2 174.5,208.3 175.0,208.0 175.5,207.4 176.0,207.2 176.5,207.4 177.0,207.8 177.5,207.0 178.0,206.6 178.5,206.3 179.0,205.8 179.5,206.0 180.0,205.3 180.5,205.7 181.0,204.6 181.5,205.4 182.0,205.0 182.5,204.4 183.0,205.2 183.5,204.7 184.0,203.9 184.5,204.3 185.0,204.7 185.5,204.3 186.0,204.7 186.5,204.6 187.0,204.5 187.5,204.3 188.0,204.6 188.5,204.3 189.0,204.2 189.5,203.4 190.0,204.5 190.5,204.7 191.0,204.2 191.5,204.3 192.0,205.2 192.5,204.0 193.0,204.9 193.5,205.8 194.0,204.9 194.5,205.7 195.0,206.4 195.5,205.9 196.0,206.4 196.5,206.2 197.0,205.3 197.5,205.3 198.0,205.1 198.5,205.0 199.0,204.4 199.5,204.2 200.0,203.8 200.5,204.0 201.0,204.3 201.5,203.9 202.0,203.5 202.5,203.4 203.0,204.5 203.5,203.9 204.0,203.6 204.5,202.2 205.0,203.1 205.5,202.8 206.0,203.0 206.5,202.3 207.0,201.9 207.5,202.3 208.0,201.7 208.5,203.0 209.0,203.0 209.5,202.1 210.0,202.3 210.5,202.0 211.0,200.3 211.5,200.6 212.0,201.0 212.5,201.0 213.0,200.9 213.5,200.7 214.0,201.8 214.5,201.6 215.0,200.9 215.5,200.9 216.0,202.1 216.5,201.9 217.0,202.3 217.5,202.1 218.0,201.6 218.5,202.1 219.0,201.3 219.5,201.9 220.0,202.2 220.5,202.5 221.0,202.1 221.5,202.4 222.0,202.6 222.5,202.7 223.0,202.8 223.5,202.4 224.0,202.0 224.5,202.2 225.0,201.7 225.5,201.2 226.0,201.0 226.5,201.0 227.0,200.8 227.5,200.7 228.0,200.5 228.5,200.5 229.0,200.2 229.5,199.7 230.0,200.1 230.5,201.0 231.0,201.4 231.5,201.7 232.0,202.6 232.5,201.5 233.0,200.5 233.5,200.6 234.0,199.7 234.5,200.9 235.0,200.8 235.5,200.9 236.0,202.0 236.5,203.0 237.0,202.3 237.5,202.0 238.0,202.3 238.5,202.7 239.0,202.8 239.5,202.6 240.0,203.1 240.5,202.8 241.0,202.5 241.5,202.7 242.0,203.1 242.5,202.8 243.0,202.8 243.5,202.1 244.0,202.4 244.5,202.7 245.0,202.3 245.5,202.7 246.0,202.5 246.5,202.6 247.0,202.2 247.5,203.1 248.0,202.6 248.5,202.0 249.0,202.1 249.5,202.9 250.0,201.9 250.5,202.2 251.0,202.2 251.5,201.8 252.0,201.4 252.5,201.8 253.0,201.8 253.5,202.0 254.0,201.8 254.5,201.5 255.0,201.7 255.5,201.6 256.0,201.4 256.5,201.3 257.0,201.2 257.5,201.5 258.0,200.8 258.5,200.9 259.0,201.1 259.5,200.7 260.0,201.1 260.5,200.7 261.0,201.3 261.5,201.8 262.0,201.9 262.5,201.8 263.0,201.8 263.5,201.5 264.0,202.7 264.5,202.3 265.0,202.6 265.5,202.0 266.0,202.4 266.5,201.9 267.0,202.9 267.5,202.9 268.0,201.9 268.5,202.6 269.0,202.8 269.5,202.0 270.0,202.0 270.5,202.2 271.0,202.4 271.5,202.1 272.0,202.6 272.5,202.7 273.0,202.8 273.5,203.2 274.0,203.8 274.5,204.1 275.0,203.5 275.5,203.7 276.0,203.3 276.5,203.1 277.0,203.3 277.5,203.2 278.0,203.2 278.5,202.3 279.0,202.3 279.5,202.6 280.0,202.3 280.5,202.1 281.0,202.0 281.5,201.6 282.0,202.0 282.5,201.7 283.0,201.4 283.5,200.8 284.0,200.6 284.5,199.4 285.0,199.7 285.5,199.7 286.0,198.8 286.5,199.1 287.0,198.9 287.5,198.1 288.0,198.2 288.5,193.0 289.0,188.8 289.5,185.0 290.0,179.9 290.5,178.1 291.0,178.8 291.5,178.4 292.0,179.2 292.5,177.8 293.0,175.3 293.5,173.4 294.0,174.4 294.5,172.2 295.0,170.1 295.5,170.3 296.0,168.2 296.5,166.2 297.0,163.9 297.5,159.3 298.0,161.0 298.5,154.0 299.0,153.9 299.5,150.5 300.0,150.6 300.5,143.0 301.0,144.1 301.5,144.1 302.0,143.0 302.5,144.2 303.0,139.0 303.5,138.9 304.0,136.3 304.5,135.9 305.0,134.4 305.5,132.5 306.0,132.9 306.5,130.7 307.0,135.0 307.5,131.8 308.0,134.4 308.5,138.4 309.0,135.1 309.5,136.3 310.0,139.0 310.5,137.5 311.0,136.6 311.5,138.9 312.0,140.0 312.5,139.5 313.0,136.4 313.5,140.0 314.0,139.2 314.5,135.7 315.0,135.5 315.5,132.9 316.0,134.7 316.5,129.8 317.0,130.8 317.5,127.5 318.0,125.8 318.5,129.0 319.0,130.8 319.5,129.2 320.0,128.8 320.5,132.2 321.0,131.6 321.5,133.0 322.0,135.9 322.5,136.1 323.0,134.1 323.5,138.1 324.0,133.5 324.5,134.1 325.0,130.9 325.5,131.2 326.0,127.5 326.5,132.8 327.0,131.3 327.5,126.3 328.0,125.2 328.5,124.4 329.0,128.5 329.5,125.1 330.0,125.1 330.5,124.1 331.0,123.8 331.5,121.3 332.0,122.4 332.5,119.1 333.0,120.5 333.5,120.4 334.0,119.8 334.5,117.9 335.0,116.1 335.5,117.3 336.0,115.5 336.5,118.3 337.0,116.3 337.5,112.3 338.0,109.2 338.5,106.3 339.0,103.4 339.5,100.4 340.0,97.5 340.5,93.9 341.0,90.0 341.5,91.6 342.0,85.8 342.5,89.0 343.0,95.8 343.5,89.8 344.0,94.1 344.5,97.8 345.0,100.3 345.5,103.2 346.0,104.6 346.5,106.6 347.0,107.1 347.5,109.3 348.0,105.8 348.5,107.0 349.0,108.0 349.5,105.7 350.0,105.2 350.5,106.6 351.0,102.9 351.5,103.6 352.0,102.3 352.5,99.9 353.0,98.5 353.5,95.8 354.0,91.9 354.5,92.6 355.0,91.8 355.5,92.6 356.0,95.8 356.5,99.8 357.0,99.5 357.5,101.8 358.0,103.5 358.5,99.1 359.0,99.9 359.5,99.1 360.0,101.6 360.5,98.4 361.0,98.2 361.5,94.3 362.0,94.3 362.5,93.1 363.0,89.0 363.5,93.4 364.0,91.5 364.5,86.0 365.0,89.3 365.5,88.3 366.0,89.8 366.5,90.1 367.0,87.5 367.5,91.4 368.0,96.0 368.5,94.3 369.0,95.3 369.5,94.1 370.0,93.7 370.5,95.7 371.0,97.4 371.5,94.6 372.0,93.7 372.5,96.4 373.0,91.1 373.5,94.1 374.0,99.4 374.5,102.7 375.0,103.3 375.5,101.3 376.0,102.2 376.5,100.4 377.0,96.1 377.5,96.3 378.0,94.1 378.5,98.1 379.0,99.5 379.5,101.9 380.0,103.7 380.5,108.5 381.0,111.4 381.5,106.9 382.0,107.4 382.5,103.2 383.0,103.1 383.5,103.3 384.0,103.6 384.5,99.3 385.0,98.9 385.5,98.3 386.0,94.5 386.5,96.2 387.0,94.2 387.5,95.1 388.0,91.7 388.5,89.5 389.0,92.1 389.5,93.3 390.0,92.7 390.5,96.0 391.0,94.9 391.5,95.1 392.0,97.8 392.5,95.2 393.0,97.5 393.5,99.5 394.0,101.8 394.5,100.9 395.0,102.5 395.5,99.2 396.0,99.2 396.5,99.8 397.0,94.2 397.5,97.7 398.0,90.9 398.5,92.9 399.0,94.0 399.5,96.2 400.0,93.2 400.5,92.6 401.0,98.0 401.5,99.7 402.0,100.7 402.5,105.5 403.0,102.7 403.5,104.1 404.0,106.6 404.5,106.8 405.0,110.2 405.5,106.4 406.0,109.0 406.5,105.0 407.0,113.4 407.5,113.9 408.0,118.6 408.5,123.2 409.0,122.0 409.5,119.9 410.0,117.8 410.5,115.6 411.0,114.3 411.5,114.8 412.0,112.1 412.5,110.9 413.0,109.4 413.5,110.1 414.0,108.2 414.5,105.9 415.0,106.1 415.5,103.4 416.0,100.4 416.5,103.5 417.0,100.5 417.5,96.7 418.0,98.8 418.5,96.8 419.0,92.7 419.5,97.2 420.0,94.2 420.5,94.3 421.0,92.3 421.5,90.9 422.0,87.7 422.5,91.2 423.0,88.7 423.5,87.3 424.0,87.6 424.5,86.8 425.0,87.5 425.5,85.4 426.0,85.6 426.5,81.7 427.0,84.3 427.5,86.1 428.0,87.3 428.5,84.4 429.0,84.8 429.5,87.7 430.0,84.4 430.5,84.9 431.0,85.2 431.5,81.1 432.0,81.8 432.5,77.1 433.0,77.4 433.5,78.1 434.0,79.7 434.5,82.7 435.0,86.1 435.5,82.1 436.0,83.5 436.5,86.6 437.0,85.2 437.5,86.7 438.0,85.6 438.5,83.0 439.0,83.2 439.5,78.5 440.0,81.3 440.5,77.2 441.0,78.6 441.5,78.7 442.0,78.8 442.5,80.8 443.0,79.4 443.5,78.4 444.0,79.9 444.5,79.9 445.0,75.5 445.5,74.4 446.0,74.1 446.5,72.5 447.0,69.8 447.5,76.2 448.0,75.8 448.5,68.6 449.0,71.9 449.5,71.5 450.0,71.1 450.5,69.4 451.0,66.5 451.5,66.0 452.0,68.8 452.5,71.3 453.0,68.5 453.5,69.4 454.0,72.0 454.5,67.4 455.0,68.9 455.5,67.3 456.0,67.4 456.5,64.1 457.0,62.5 457.5,63.3 458.0,63.9 458.5,62.9 459.0,64.0 459.5,65.3 460.0,66.0 460.5,66.1 461.0,61.0 461.5,60.8 462.0,56.4 462.5,63.1 463.0,57.8 463.5,57.2 464.0,56.4 464.5,51.4 465.0,52.8 465.5,50.0 466.0,44.9 466.5,49.7 467.0,52.4 467.5,48.3 468.0,54.0 468.5,54.2 469.0,55.8 469.5,55.1 470.0,56.0 470.5,52.7 471.0,54.0 471.5,51.2 472.0,52.5 472.5,49.2 473.0,49.8 473.5,53.2 474.0,51.3 474.5,50.5 475.0,49.1 475.5,49.9 476.0,51.8 476.5,53.3 477.0,52.7 477.5,51.6 478.0,49.4 478.5,50.5 479.0,46.3 479.5,51.1 480.0,58.5 480.5,62.1 481.0,66.5 481.5,66.0 482.0,66.6 482.5,68.1 483.0,67.6 483.5,64.9 484.0,67.7 484.5,68.6 485.0,67.8 485.5,72.1 486.0,71.5 486.5,73.9 487.0,78.4 487.5,81.7 488.0,80.8 488.5,80.2 489.0,75.5 489.5,78.4 490.0,71.2 490.5,75.7 491.0,74.2 491.5,78.4 492.0,82.4 492.5,76.0 493.0,81.3 493.5,83.7 494.0,83.5 494.5,83.4 495.0,89.0 495.5,86.3 496.0,84.2 496.5,90.1 497.0,87.4 497.5,94.0 498.0,92.7 498.5,95.6 499.0,99.1 499.5,98.5 500.0,97.1 500.5,97.9 501.0,104.0 501.5,101.6 502.0,97.3 502.5,98.5 503.0,96.2 503.5,94.8 504.0,88.2 504.5,93.2 505.0,96.9 505.5,98.2 506.0,100.2 506.5,96.2 507.0,102.3 507.5,102.3 508.0,105.3 508.5,98.9 509.0,99.4 509.5,99.6 510.0,100.5 510.5,97.1 511.0,98.6 511.5,94.2 512.0,94.8 512.5,92.3 513.0,92.3 513.5,92.5 514.0,92.6 514.5,98.9 515.0,99.2 515.5,99.4 516.0,102.3 516.5,104.5 517.0,102.0 517.5,104.3 518.0,106.2 518.5,107.1 519.0,106.4 519.5,104.3 520.0,110.8 520.5,110.1 521.0,110.4 521.5,110.7 522.0,112.4 522.5,109.6 523.0,106.9 523.5,105.7 524.0,104.3 524.5,102.6 525.0,100.0 525.5,103.9 526.0,101.4 526.5,105.6 527.0,103.6 527.5,106.8 528.0,109.3 528.5,106.5 529.0,104.1 529.5,104.6 530.0,103.9 530.5,99.9 531.0,101.0 531.5,101.4 532.0,99.5 532.5,99.6 533.0,99.9 533.5,99.1 534.0,98.5 534.5,99.7 535.0,99.8 535.5,102.0 536.0,103.2 536.5,104.8 537.0,106.7 537.5,106.6 538.0,111.4 538.5,114.5 539.0,115.3 539.5,117.0 540.0,117.9 540.5,116.7 541.0,120.5 541.5,112.6 542.0,116.6 542.5,113.9 543.0,118.7 543.5,122.7 544.0,115.1 544.5,120.7 545.0,122.5 545.5,122.3 546.0,124.9 546.5,121.2 547.0,127.4 547.5,127.6 548.0,128.0 548.5,128.0 549.0,131.1 549.5,129.3 550.0,130.6 550.5,129.4 551.0,126.6 551.5,130.4 552.0,130.9 552.5,132.0 553.0,129.3 553.5,130.8 554.0,132.0 554.5,130.7 555.0,132.1 555.5,132.9 556.0,127.5 556.5,125.2 557.0,129.5 557.5,130.1 558.0,128.6 558.5,126.9 559.0,122.9 559.5,121.3 560.0,122.5 560.5,119.5 561.0,117.9 561.5,119.3 562.0,125.2 562.5,124.3 563.0,119.8 563.5,118.3 564.0,118.4 564.5,115.2 565.0,117.2 565.5,113.4 566.0,110.2 566.5,113.0 567.0,108.5 567.5,108.6 568.0,107.0 568.5,105.5 569.0,105.6 569.5,102.8 570.0,99.9 570.5,98.2 571.0,98.8 571.5,98.7 572.0,99.0 572.5,98.1 573.0,97.9 573.5,96.5 574.0,94.2 574.5,93.5 575.0,90.4 575.5,93.0 576.0,93.5 576.5,92.9 577.0,91.1 577.5,90.4 578.0,91.6 578.5,91.0 579.0,93.3 579.5,94.0 580.0,94.4 580.5,95.8 581.0,92.2 581.5,92.2 582.0,91.0 582.5,90.6 583.0,94.2 583.5,94.2 584.0,90.8 584.5,91.4 585.0,92.0 585.5,91.7 586.0,92.7 586.5,88.9 587.0,90.2 587.5,92.4 588.0,94.4 588.5,90.4 589.0,87.0 589.5,86.1 590.0,83.9 590.5,86.5 591.0,93.6 591.5,92.9 592.0,97.0 592.5,99.4 593.0,96.5 593.5,93.8 594.0,91.0 594.5,91.4 595.0,92.3 595.5,89.3 596.0,89.1 596.5,86.3 597.0,86.2 597.5,84.2 598.0,84.4 598.5,85.0 599.0,79.6 599.5,81.4 600.0,81.4 600.5,79.5 601.0,79.5 601.5,83.3 602.0,87.4 602.5,87.1 603.0,88.6 603.5,87.4 604.0,95.3 604.5,90.5 605.0,88.6 605.5,85.1 606.0,85.2 606.5,81.8 607.0,82.1 607.5,80.3 608.0,77.1 608.5,75.0 609.0,70.6 609.5,71.9 610.0,65.9 610.5,65.1 611.0,69.0 611.5,69.2 612.0,70.0 612.5,72.2 613.0,74.5 613.5,72.7 614.0,75.3 614.5,78.7 615.0,78.2 615.5,77.6 616.0,78.9 616.5,79.3 617.0,80.3 617.5,82.4 618.0,81.8 618.5,77.9 619.0,82.0 619.5,80.5 620.0,83.1 620.5,82.6 621.0,85.6 621.5,90.7 622.0,86.9 622.5,88.4 623.0,89.6 623.5,86.3 624.0,85.5 624.5,87.6 625.0,84.2 625.5,80.5 626.0,79.5 626.5,83.9 627.0,82.3 627.5,83.9 628.0,85.9 628.5,88.5 629.0,90.3 629.5,92.3 630.0,94.2 630.5,91.8 631.0,92.1 631.5,88.9 632.0,83.5 632.5,84.5 633.0,84.0 633.5,83.3 634.0,82.1 634.5,80.5 635.0,81.6 635.5,79.6 636.0,84.1 636.5,83.4 637.0,80.9 637.5,85.9 638.0,85.5 638.5,78.5 639.0,82.6 639.5,78.6 640.0,78.5 640.5,74.7 641.0,79.4 641.5,81.0 642.0,82.3 642.5,78.5 643.0,76.3 643.5,68.2 644.0,64.9 644.5,62.1 645.0,61.1 645.5,58.5 646.0,57.6 646.5,56.5 647.0,55.1 647.5,54.8 648.0,56.2 648.5,59.6 649.0,60.3 649.5,60.4 650.0,61.0 650.5,65.4 651.0,63.0 651.5,65.6 652.0,67.0 652.5,65.0 653.0,67.4 653.5,64.6 654.0,68.7 654.5,68.6 655.0,66.8 655.5,71.9 656.0,70.5 656.5,74.7 657.0,71.8 657.5,73.2 658.0,74.5 658.5,71.7 659.0,70.9 659.5,67.8 660.0,68.1 660.5,65.8 661.0,64.9 661.5,58.6 662.0,64.0 662.5,59.6 663.0,54.0 663.5,59.2 664.0,61.8 664.5,64.8 665.0,63.2 665.5,68.1 666.0,65.7 666.5,70.6 667.0,66.8 667.5,69.4 668.0,68.9 668.5,68.9 669.0,73.9 669.5,71.0 670.0,69.6 670.5,66.0 671.0,61.0 671.5,56.7 672.0,55.9 672.5,57.1 673.0,58.1 673.5,61.7 674.0,62.6 674.5,63.5 675.0,66.3 675.5,67.8 676.0,70.4 676.5,70.0 677.0,69.1 677.5,65.1 678.0,62.4 678.5,60.9 679.0,52.2 679.5,54.2 680.0,49.9 680.5,52.4 681.0,53.4 681.5,51.2 682.0,53.1 682.5,54.9 683.0,55.2 683.5,55.7 684.0,51.2 684.5,50.0 685.0,52.9 685.5,54.8 686.0,54.8 686.5,53.5 687.0,58.3 687.5,56.7 688.0,54.6 688.5,51.2 689.0,50.9 689.5,50.0 690.0,46.1 690.5,41.4 691.0,42.6 691.5,45.3 692.0,47.0 692.5,51.0 693.0,51.0 693.5,49.4 694.0,46.5 694.5,45.5 695.0,44.7 695.5,43.1 696.0,48.5 696.5,49.1 697.0,49.3 697.5,49.5 698.0,52.0 698.5,49.2 699.0,49.8 699.5,48.7 700.0,51.8 700.5,53.8 701.0,52.9 701.5,51.1 702.0,48.3 702.5,47.3 703.0,42.9 703.5,45.4 704.0,41.3 704.5,40.9 705.0,42.2 705.5,42.8 706.0,46.5 706.5,45.5 707.0,40.2 707.5,42.8 708.0,41.5 708.5,40.8 709.0,41.0 709.5,44.0 710.0,45.9 710.5,48.8 711.0,48.9 711.5,47.3 712.0,52.4 712.5,49.9 713.0,54.5 713.5,51.4 714.0,52.8 714.5,51.5 715.0,51.1 715.5,53.2 716.0,51.4 716.5,52.0 717.0,52.5 717.5,50.4 718.0,53.1 718.5,52.6 719.0,51.3 719.5,53.4 720.0,50.7 720.5,52.0 721.0,52.7 721.5,52.3 722.0,58.0 722.5,58.4 723.0,55.6 723.5,52.8 724.0,49.1 724.5,53.1 725.0,54.1 725.5,49.0 726.0,46.6 726.5,50.5 727.0,52.9 727.5,53.2 728.0,58.8 728.5,58.8 729.0,55.4 729.5,57.8 730.0,56.6 730.5,58.3 731.0,59.0 731.5,55.7 732.0,53.5 732.5,61.7 733.0,62.6 733.5,63.3 734.0,57.2 734.5,60.1 735.0,60.5 735.5,56.4 736.0,48.6 736.5,51.0 737.0,51.7 737.5,55.2 738.0,56.8 738.5,56.1 739.0,54.7 739.5,59.3 740.0,58.2 740.5,61.3 741.0,61.9 741.5,65.5 742.0,65.9 742.5,62.1 743.0,62.3 743.5,63.5 744.0,58.4 744.5,58.9 745.0,59.0 745.5,56.6 746.0,52.9 746.5,50.5 747.0,51.4 747.5,54.7 748.0,55.7 748.5,59.3 749.0,53.5 749.5,56.9 750.0,56.3 750.5,50.2 751.0,49.6 751.5,49.3 752.0,46.2 752.5,46.7 753.0,47.8 753.5,45.6 754.0,47.8 754.5,48.4 755.0,51.1" fill="none" stroke="#ff00ff" stroke-width="2.5" stroke-linejoin="miter" stroke-miterlimit="2"/><rect x="61" y="220.0" width="3" height="6.0" fill="#ff00ff"/><rect x="67" y="218.5" width="3" height="16.5" fill="#ff00ff"/><rect x="89" y="219.60000000000002" width="3" height="15.0" fill="#ff00ff"/><rect x="96" y="217.25" width="3" height="8.75" fill="#ff00ff"/><rect x="116" y="217.0" width="3" height="31.700000000000045" fill="#ff00ff"/><rect x="166" y="210.0" width="3" height="22.0" fill="#ff00ff"/><rect x="201" y="202.79999999999995" width="3" height="5.2000000000000455" fill="#ff00ff"/><rect x="237" y="201.5333333333333" width="3" height="57.4666666666667" fill="#ff00ff"/><rect x="274" y="203.0" width="3" height="2.0" fill="#ff00ff"/><rect x="312" y="136.66666666666669" width="3" height="20.333333333333314" fill="#ff00ff"/><rect x="325" y="129.5" width="3" height="11.5" fill="#ff00ff"/><rect x="360" y="95.66666666666669" width="3" height="34.333333333333314" fill="#ff00ff"/><rect x="370" y="93.5" width="3" height="101.5" fill="#ff00ff"/><rect x="376" y="97.33333333333331" width="3" height="61.666666666666686" fill="#ff00ff"/><rect x="409" y="117.66666666666669" width="3" height="17.333333333333314" fill="#ff00ff"/><rect x="430" y="81.33333333333331" width="3" height="31.666666666666686" fill="#ff00ff"/><rect x="448" y="71.0" width="3" height="37.0" fill="#ff00ff"/><rect x="461" y="59.666666666666686" width="3" height="35.333333333333314" fill="#ff00ff"/><rect x="470" y="51.5" width="3" height="86.5" fill="#ff00ff"/><rect x="481" y="66.0" width="3" height="308.0" fill="#ff00ff"/><rect x="488" y="76.0" width="3" height="29.0" fill="#ff00ff"/><rect x="521" y="111.0" width="3" height="5.0" fill="#ff00ff"/><rect x="540" y="116.0" width="3" height="74.0" fill="#ff00ff"/><rect x="544" y="120.66666666666669" width="3" height="23.333333333333314" fill="#ff00ff"/><rect x="550" y="129.39999999999998" width="3" height="28.600000000000023" fill="#ff00ff"/><rect x="555" y="128.0" width="3" height="21.5" fill="#ff00ff"/><rect x="583" y="89.80000000000001" width="3" height="54.19999999999999" fill="#ff00ff"/><rect x="593" y="91.0" width="3" height="41.0" fill="#ff00ff"/><rect x="617" y="81.0" width="3" height="22.5" fill="#ff00ff"/><rect x="633" y="82.0" width="3" height="50.0" fill="#ff00ff"/><rect x="669" y="66.0" width="3" height="20.0" fill="#ff00ff"/><rect x="693" y="46.0" width="3" height="102.0" fill="#ff00ff"/><rect x="702" y="44.333333333333314" width="3" height="59.666666666666686" fill="#ff00ff"/><rect x="709" y="46.0" width="3" height="12.0" fill="#ff00ff"/><rect x="722" y="54.333333333333314" width="3" height="9.166666666666686" fill="#ff00ff"/><rect x="742" y="60.666666666666686" width="3" height="11.833333333333314" fill="#ff00ff"/><line x1="40.5" y1="31" x2="40.5" y2="376" stroke="#000" stroke-width="1.6"/><line x1="40" y1="375.5" x2="776" y2="375.5" stroke="#000" stroke-width="1.6"/><line x1="765" y1="40" x2="776" y2="40" stroke="#ff00ff" stroke-width="3"/></svg>
<div style="left:21px;top:406px;font-size:11px;line-height:12px;color:#7a7a7a;text-align:right;width:40px">997</div>
<div style="left:21px;top:573px;font-size:11px;line-height:12px;color:#7a7a7a;text-align:right;width:40px">94</div>
<div style="left:17px;top:591px;font-size:11px;line-height:12px;color:#7a7a7a;text-align:right;width:40px">0</div>
<div style="left:21px;top:741px;font-size:11px;line-height:12px;color:#7a7a7a;text-align:right;width:40px">−809</div>
<div style="left:62px;top:751px;font-size:11px;line-height:12px;color:#7a7a7a">1</div>
<div style="left:766px;top:751px;font-size:11px;line-height:12px;color:#7a7a7a">2032</div>
<div style="left:803px;top:740px;font-size:12px;line-height:15px;color:#000">区块ID</div>
<div style="left:804px;top:407px;font-size:12px;line-height:15px;color:#ff00ff">盈亏曲线</div>
</body></html>
